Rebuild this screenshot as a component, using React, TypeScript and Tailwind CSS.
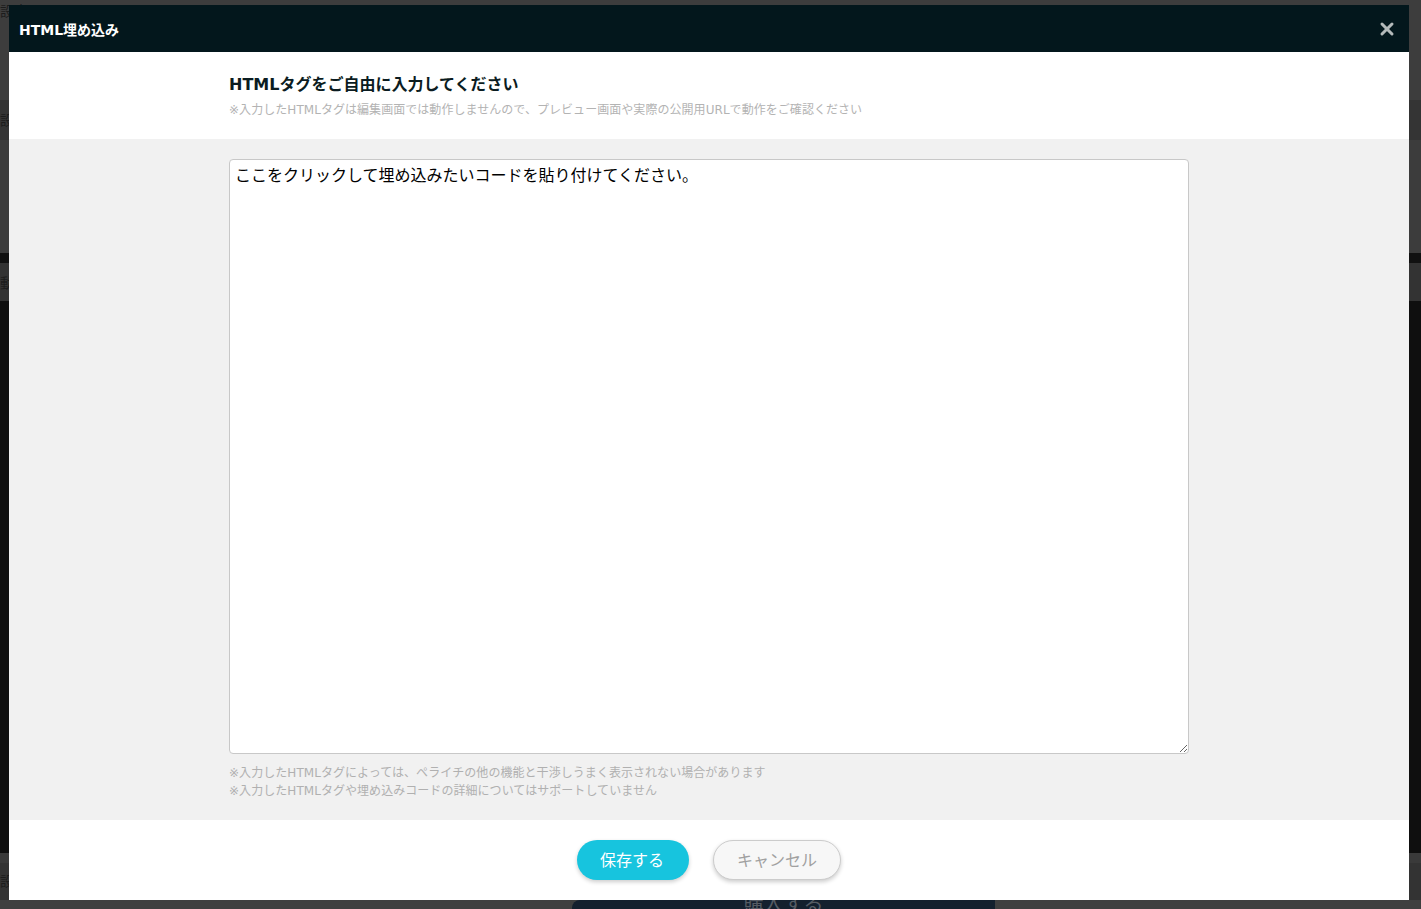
import React from 'react';
import { X } from 'lucide-react';

const font = "font-['DejaVu_Sans','Noto_Sans_CJK_JP',sans-serif]";

export default function App() {
  return (
    <div className={`relative h-[909px] w-full overflow-hidden bg-[#3c3c3c] ${font}`}>
      {/* dimmed page behind the dialog */}
      <div className="flex h-full flex-col font-['Noto_Sans_CJK_JP',sans-serif]">
        <div className="h-[100px] shrink-0 bg-[#3d3d3d] text-[14px] leading-[20px] text-[#1c1c1c]">設定</div>
        <div className="h-[40px] shrink-0 bg-[#343434] pt-[7px] text-[14px] leading-[24px] text-[#1c1c1c]">設定</div>
        <div className="h-[113px] shrink-0 bg-[#3c3c3c]" />
        <div className="h-[10px] shrink-0 bg-[#111111]" />
        <div className="h-[38px] shrink-0 bg-[#333333] pt-[7px] text-[14px] leading-[24px] text-[#1c1c1c]">動画</div>
        <div className="h-[552px] shrink-0 bg-[#0f0f0f]" />
        <div className="h-[10px] shrink-0 bg-[#3a3a3a]" />
        <div className="h-[37px] shrink-0 bg-[#333333] pt-[5px] text-[14px] leading-[24px] text-[#1c1c1c]">設定</div>
        <div className="h-[9px] shrink-0 overflow-hidden bg-[#3f3f3f] pl-[572px]">
          <div className="flex h-[40px] w-[423px] justify-center rounded-tl-[8px] bg-[#14202e] text-[20px] leading-[20px] text-[#555b63]">
            <span className="-mt-[7px]">購入する</span>
          </div>
        </div>
      </div>

      {/* dialog */}
      <div className="absolute left-[9px] top-[5px] flex h-[895px] w-[1400px] flex-col bg-white">
        <div className="flex h-[47px] shrink-0 items-center justify-between bg-[#03171c] pl-[10px] pr-[12px]">
          <span className="pt-[2px] text-[14px] font-bold leading-[24px] text-white">HTML埋め込み</span>
          <X size={20} strokeWidth={3.6} className="text-[#b4baba]" />
        </div>

        <div className="h-[87px] shrink-0 pl-[220px] pt-[21px]">
          <h2 className="text-[16px] font-bold leading-[24px] text-[#0b1c21]">HTMLタグをご自由に入力してください</h2>
          <p className="mt-[4px] text-[12px] leading-[18px] tracking-[0.05px] text-[#b3b3b3]">
            ※入力したHTMLタグは編集画面では動作しませんので、プレビュー画面や実際の公開用URLで動作をご確認ください
          </p>
        </div>

        <div className="flex h-[681px] shrink-0 flex-col bg-[#f1f1f1] pl-[220px] pt-[20px]">
          <textarea
            className="block h-[595px] w-[960px] rounded-[4px] border border-[#c8c8c8] bg-white px-[5px] py-[2px] font-['Noto_Sans_CJK_JP',sans-serif] text-[16px] leading-[24px] text-black outline-none"
            defaultValue="ここをクリックして埋め込みたいコードを貼り付けてください。"
          />
          <p className="mt-[10px] text-[12px] leading-[18px] tracking-[0.05px] text-[#b0b0b0]">
            ※入力したHTMLタグによっては、ペライチの他の機能と干渉しうまく表示されない場合があります
            <br />
            ※入力したHTMLタグや埋め込みコードの詳細についてはサポートしていません
          </p>
        </div>

        <div className="flex flex-1 items-start justify-center gap-[24px] pt-[20px]">
          <button className="h-[40px] w-[112px] rounded-full bg-[#17c4de] pb-[2px] pr-[2px] font-['Noto_Sans_CJK_JP',sans-serif] text-[16px] text-white shadow-[0_2px_4px_rgba(0,0,0,0.2)]">
            保存する
          </button>
          <button className="h-[40px] w-[128px] rounded-full border border-[#cccccc] bg-[#f7f7f7] pb-[2px] font-['Noto_Sans_CJK_JP',sans-serif] text-[16px] text-[#a0a0a0] shadow-[0_2px_4px_rgba(0,0,0,0.2)]">
            キャンセル
          </button>
        </div>
      </div>
    </div>
  );
}
